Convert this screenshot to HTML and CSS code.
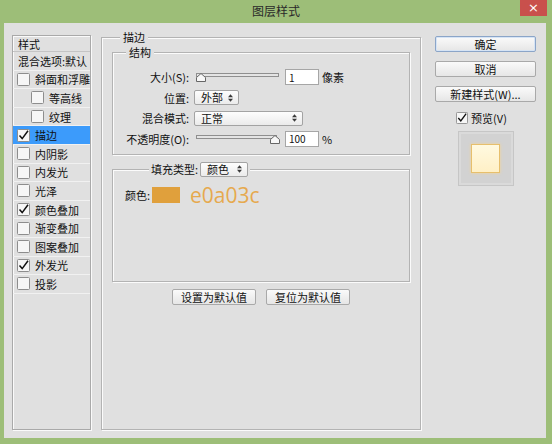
FILE: index.html
```html
<!DOCTYPE html>
<html lang="zh-CN">
<head>
    <meta charset="UTF-8">
    <meta name="viewport" content="width=device-width, initial-scale=1.0">
    <title>图层样式</title>
    <link rel="stylesheet" href="styles.css">
</head>
<body>
    <div class="window">
        <div class="titlebar">
            <span class="title">图层样式</span>
            <span class="close">×</span>
        </div>

        <div class="content">
            <ul class="styles-list">
                <li class="head">样式</li>
                <li class="plain">混合选项:默认</li>
                <li><svg class="cb" viewBox="0 0 13 13"><rect x="0.5" y="0.5" width="12" height="12" rx="1"/></svg>斜面和浮雕</li>
                <li class="sub"><svg class="cb" viewBox="0 0 13 13"><rect x="0.5" y="0.5" width="12" height="12" rx="1"/></svg>等高线</li>
                <li class="sub"><svg class="cb" viewBox="0 0 13 13"><rect x="0.5" y="0.5" width="12" height="12" rx="1"/></svg>纹理</li>
                <li class="active"><svg class="cb" viewBox="0 0 13 13"><rect x="0.5" y="0.5" width="12" height="12" rx="1"/><path d="M2.5 6.5 L5.2 9.6 L11 1.8"/></svg>描边</li>
                <li><svg class="cb" viewBox="0 0 13 13"><rect x="0.5" y="0.5" width="12" height="12" rx="1"/></svg>内阴影</li>
                <li><svg class="cb" viewBox="0 0 13 13"><rect x="0.5" y="0.5" width="12" height="12" rx="1"/></svg>内发光</li>
                <li><svg class="cb" viewBox="0 0 13 13"><rect x="0.5" y="0.5" width="12" height="12" rx="1"/></svg>光泽</li>
                <li><svg class="cb" viewBox="0 0 13 13"><rect x="0.5" y="0.5" width="12" height="12" rx="1"/><path d="M2.5 6.5 L5.2 9.6 L11 1.8"/></svg>颜色叠加</li>
                <li><svg class="cb" viewBox="0 0 13 13"><rect x="0.5" y="0.5" width="12" height="12" rx="1"/></svg>渐变叠加</li>
                <li><svg class="cb" viewBox="0 0 13 13"><rect x="0.5" y="0.5" width="12" height="12" rx="1"/></svg>图案叠加</li>
                <li><svg class="cb" viewBox="0 0 13 13"><rect x="0.5" y="0.5" width="12" height="12" rx="1"/><path d="M2.5 6.5 L5.2 9.6 L11 1.8"/></svg>外发光</li>
                <li><svg class="cb" viewBox="0 0 13 13"><rect x="0.5" y="0.5" width="12" height="12" rx="1"/></svg>投影</li>
            </ul>

            <fieldset class="group main">
                <legend>描边</legend>

                <fieldset class="group struct">
                    <legend>结构</legend>
                    <div class="row">
                        <label>大小(S):</label>
                        <svg class="slider" viewBox="0 0 88 12">
                            <rect class="track" x="2.5" y="2.5" width="82" height="3"/>
                            <path class="thumb" d="M2.5 10.5 V6.5 L7 2.5 L11.5 6.5 V10.5 Z"/>
                        </svg>
                        <input class="num" type="text" value="1">
                        <span class="unit">像素</span>
                    </div>
                    <div class="row">
                        <label>位置:</label>
                        <div class="select short">外部
                            <svg class="arrows" viewBox="0 0 5 8"><path d="M0 3.2 L2.5 0.3 L5 3.2Z M0 4.8 L2.5 7.7 L5 4.8Z"/></svg>
                        </div>
                    </div>
                    <div class="row">
                        <label>混合模式:</label>
                        <div class="select long">正常
                            <svg class="arrows" viewBox="0 0 5 8"><path d="M0 3.2 L2.5 0.3 L5 3.2Z M0 4.8 L2.5 7.7 L5 4.8Z"/></svg>
                        </div>
                    </div>
                    <div class="row">
                        <label>不透明度(O):</label>
                        <svg class="slider" viewBox="0 0 88 12">
                            <rect class="track" x="2.5" y="2.5" width="80" height="3"/>
                            <path class="thumb" d="M76.5 10.5 V6.5 L81 2.5 L85.5 6.5 V10.5 Z"/>
                        </svg>
                        <input class="num" type="text" value="100">
                        <span class="unit">%</span>
                    </div>
                </fieldset>

                <fieldset class="group fill">
                    <legend>
                        <span>填充类型:</span>
                        <span class="select fill-type">颜色
                            <svg class="arrows" viewBox="0 0 5 8"><path d="M0 3.2 L2.5 0.3 L5 3.2Z M0 4.8 L2.5 7.7 L5 4.8Z"/></svg>
                        </span>
                    </legend>
                    <div class="fill-body">
                        <span>颜色:</span>
                        <span class="swatch"></span>
                        <span class="hex">e0a03c</span>
                    </div>
                </fieldset>

                <div class="defaults">
                    <button>设置为默认值</button>
                    <button>复位为默认值</button>
                </div>
            </fieldset>

            <div class="side">
                <button class="ok">确定</button>
                <button>取消</button>
                <button>新建样式(W)...</button>
                <div class="preview-check">
                    <svg class="cb" viewBox="0 0 13 13"><rect x="0.5" y="0.5" width="12" height="12" rx="1"/><path d="M2.5 6.5 L5.2 9.6 L11 1.8"/></svg>
                    预览(V)
                </div>
                <div class="preview">
                    <div class="preview-swatch"></div>
                </div>
            </div>
        </div>
    </div>
</body>
</html>
```

FILE: styles.css
```css
body {
    margin: 0;
    padding: 0;
    background-color: #9dbe78;
    font-family: "Noto Sans CJK SC", "Noto Sans", sans-serif;
    font-size: 11px;
    color: #111;
}

.window {
    width: 552px;
    height: 444px;
}

.titlebar {
    height: 23px;
    display: flex;
    align-items: flex-start;
    padding-left: 32px;
}

.title {
    flex: 1;
    text-align: center;
    font-size: 12px;
    line-height: 22px;
    color: #2a2a2a;
}

.close {
    width: 27px;
    height: 16px;
    margin-right: 5px;
    background-color: #c9504c;
    color: white;
    font-size: 13px;
    line-height: 15px;
    text-align: center;
    font-family: "DejaVu Sans", sans-serif;
}

.content {
    margin: 0 6px 0 4px;
    height: 415px;
    box-sizing: border-box;
    padding: 7px 10px 8px 8px;
    background-color: #e0e0e0;
    display: flex;
    align-items: stretch;
}

/* left list */
.styles-list {
    list-style: none;
    margin: 5px 0 0 0;
    padding: 0;
    width: 79px;
    box-sizing: border-box;
    border: 1px solid #a9a9a9;
    box-shadow: inset 1px 1px 0 #fafafa, 1px 1px 0 #fafafa;
}

.styles-list li {
    height: 18.6px;
    box-sizing: border-box;
    border-bottom: 1px solid #f1f1f1;
    display: flex;
    align-items: center;
    padding-left: 4px;
    white-space: nowrap;
    overflow: hidden;
}

.styles-list li.head {
    height: 16px;
    padding-left: 5px;
    border-bottom: 1px solid #c4c4c4;
}

.styles-list li.plain {
    padding-left: 5px;
}

.styles-list li.sub {
    padding-left: 18px;
}

.styles-list li.active {
    background-color: #3c9bfb;
}

.cb {
    width: 13px;
    height: 13px;
    margin-right: 5px;
    flex-shrink: 0;
}

.cb rect {
    fill: #f6f6f6;
    stroke: #8d8d8d;
}

.cb path {
    fill: none;
    stroke: #111;
    stroke-width: 1.5;
}

/* group boxes */
.group {
    margin: 0;
    padding: 0;
    min-width: 0;
    box-sizing: border-box;
    border: 1px solid #b3b3b3;
    box-shadow: inset 1px 1px 0 #fbfbfb, 1px 1px 0 #fbfbfb;
}

.group > legend {
    padding: 0 3px;
    line-height: 14px;
    background-color: #e0e0e0;
}

.main {
    width: 320px;
    margin-left: 10px;
}

.main > legend {
    margin-left: 18px;
}

.struct {
    margin: 1px 10px 0 10px;
    padding: 10px 0 7px 0;
}

.struct > legend {
    margin-left: 13px;
}

.row {
    display: flex;
    align-items: center;
    height: 16px;
    margin-bottom: 4.5px;
}

.row:last-child {
    margin-bottom: 0;
}

.row label {
    width: 76px;
    text-align: right;
    margin-right: 5px;
    white-space: nowrap;
}

.slider {
    width: 88px;
    height: 12px;
    margin-right: 3px;
}

.slider .track {
    fill: #e4e4e4;
    stroke: #8f8f8f;
}

.slider .thumb {
    fill: #f7f7f7;
    stroke: #666;
}

.num {
    width: 34px;
    height: 16px;
    box-sizing: border-box;
    margin: 0;
    padding: 0 3px;
    border: 1px solid #a6a6a6;
    background: white;
    font-family: "Noto Sans CJK SC", "Noto Sans", sans-serif;
    font-size: 10px;
    color: #111;
}

.unit {
    margin-left: 3px;
}

.select {
    height: 15px;
    box-sizing: border-box;
    border: 1px solid #a3a3a3;
    border-radius: 2px;
    background: linear-gradient(#fdfdfd, #ebebeb);
    display: inline-flex;
    align-items: center;
    justify-content: space-between;
    padding: 0 5px 0 6px;
    line-height: 13px;
}

.select.short {
    width: 45px;
}

.select.long {
    width: 109px;
}

.arrows {
    width: 5px;
    height: 8px;
}

.arrows path {
    fill: #3a3a3a;
}

.fill {
    margin: 7px 10px 0 10px;
    padding: 0;
}

.fill > legend {
    margin-left: 36px;
    padding: 0 2px;
    display: flex;
    align-items: center;
    line-height: 15px;
}

.select.fill-type {
    width: 48px;
    margin-left: 2px;
}

.fill-body {
    height: 104px;
    box-sizing: border-box;
    padding: 10px 0 0 12px;
    display: flex;
    align-items: flex-start;
}

.fill-body > span:first-child {
    line-height: 16px;
}

.swatch {
    width: 28px;
    height: 16px;
    margin-left: 2px;
    background-color: #e0a03c;
}

.hex {
    margin-left: 10px;
    font-family: "Open Sans", sans-serif;
    font-size: 21px;
    line-height: 16px;
    color: #e6a94e;
}

.defaults {
    display: flex;
    justify-content: center;
    gap: 10px;
    margin-top: 7px;
}

button {
    height: 16px;
    margin: 0;
    padding: 0;
    box-sizing: border-box;
    border: 1px solid #a9a9a9;
    border-radius: 2px;
    background: linear-gradient(#fafafa, #e6e6e6);
    font-family: "Noto Sans CJK SC", "Noto Sans", sans-serif;
    font-size: 11px;
    line-height: 14px;
    color: #111;
}

.defaults button {
    width: 84px;
}

/* right column */
.side {
    width: 101px;
    margin-left: 14px;
    padding-top: 6px;
    display: flex;
    flex-direction: column;
    align-items: center;
}

.side button {
    width: 101px;
    margin-bottom: 9px;
}

.side button.ok {
    border-color: #8ba5c8;
    box-shadow: inset 0 0 0 1px #d6e4f5;
}

.preview-check {
    display: flex;
    align-items: center;
    height: 13px;
    margin-top: 0;
    margin-right: 8px;
}

.preview-check .cb {
    width: 12px;
    height: 12px;
    margin-right: 3px;
}

.preview {
    width: 56px;
    height: 55px;
    box-sizing: border-box;
    margin-top: 7px;
    border: 1px solid #c6c6c6;
    background-color: #d2d2d2;
    box-shadow: inset 0 0 0 2px #dadada;
    display: flex;
    align-items: center;
    justify-content: center;
}

.preview-swatch {
    width: 29px;
    height: 29px;
    box-sizing: border-box;
    border: 1px solid #e7bf6c;
    background: linear-gradient(#fff9e0, #fff0c6);
    box-shadow: 0 0 3px #f3d597;
}
```
